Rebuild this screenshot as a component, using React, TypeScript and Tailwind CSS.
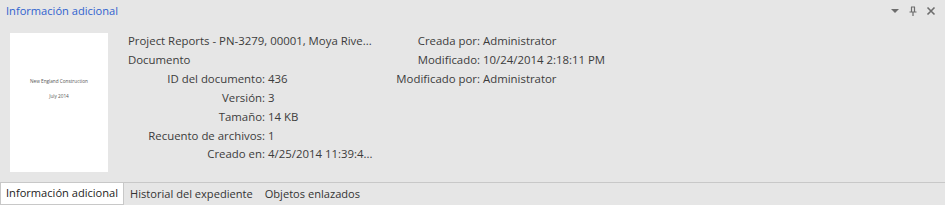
import React from "react";

const font = { fontFamily: '"Segoe UI", "Open Sans", "Noto Sans", sans-serif' };

type Row = { label: string; value: string };

const leftRows: Row[] = [
  { label: "ID del documento:", value: "436" },
  { label: "Versión:", value: "3" },
  { label: "Tamaño:", value: "14 KB" },
  { label: "Recuento de archivos:", value: "1" },
  { label: "Creado en:", value: "4/25/2014 11:39:4..." },
];

const rightRows: Row[] = [
  { label: "Creada por:", value: "Administrator" },
  { label: "Modificado:", value: "10/24/2014 2:18:11 PM" },
  { label: "Modificado por:", value: "Administrator" },
];

function PanelIcons() {
  return (
    <div className="flex items-center gap-[8px] text-[#6d6d6d]">
      <svg width="10" height="10" viewBox="0 0 10 10">
        <path d="M1 3h8L5 7z" fill="currentColor" />
      </svg>
      <svg width="10" height="10" viewBox="0 0 10 10" fill="none" stroke="currentColor">
        <path d="M3.5 1v5M6.5 1v5M3 1h4M1.5 6h7M5 6v4" strokeWidth="1.2" />
      </svg>
      <svg width="10" height="10" viewBox="0 0 10 10" fill="none" stroke="currentColor">
        <path d="M1.5 1.5l7 7M8.5 1.5l-7 7" strokeWidth="1.6" />
      </svg>
    </div>
  );
}

export default function App() {
  return (
    <div className="flex h-[205px] w-[945px] flex-col bg-[#e6e6e6] text-[11.4px] text-[#3c3c3c]" style={font}>
      <div className="flex h-[22px] items-center justify-between pl-[6px] pr-[9px]">
        <span className="text-[11.1px] text-[#2f62cf]">Información adicional</span>
        <PanelIcons />
      </div>

      <div className="flex flex-1 items-start pl-[10px] pt-[11px]">
        <div className="flex h-[139px] w-[98px] shrink-0 flex-col items-center bg-white pt-[45px] text-[4.7px] leading-[6px] text-[#555]">
          <span>New England Construction</span>
          <span className="mt-[9px]">July 2014</span>
        </div>

        <div className="ml-[20px] -mt-[1px] flex items-start whitespace-nowrap">
          <div className="flex w-[262px] flex-col leading-[18.9px]">
            <div>Project Reports - PN-3279, 00001, Moya Rive...</div>
            <div>Documento</div>
            {leftRows.map((r) => (
              <div key={r.label} className="flex">
                <span className="w-[137px] shrink-0 text-right">{r.label}</span>
                <span className="ml-[3px]">{r.value}</span>
              </div>
            ))}
          </div>
          <div className="flex flex-col leading-[18.9px]">
            {rightRows.map((r) => (
              <div key={r.label} className="flex">
                <span className="w-[90px] shrink-0 text-right">{r.label}</span>
                <span className="ml-[3px]">{r.value}</span>
              </div>
            ))}
          </div>
        </div>
      </div>

      <div className="flex h-[23px] border-t border-[#c8c8c8] text-[11.1px]">
        <div className="flex h-[22px] items-center border border-t-0 border-[#c8c8c8] bg-white px-[5px] text-[#222]">
          Información adicional
        </div>
        <div className="flex items-center px-[6px] text-[#333]">Historial del expediente</div>
        <div className="flex items-center px-[6px] text-[#333]">Objetos enlazados</div>
      </div>
    </div>
  );
}
